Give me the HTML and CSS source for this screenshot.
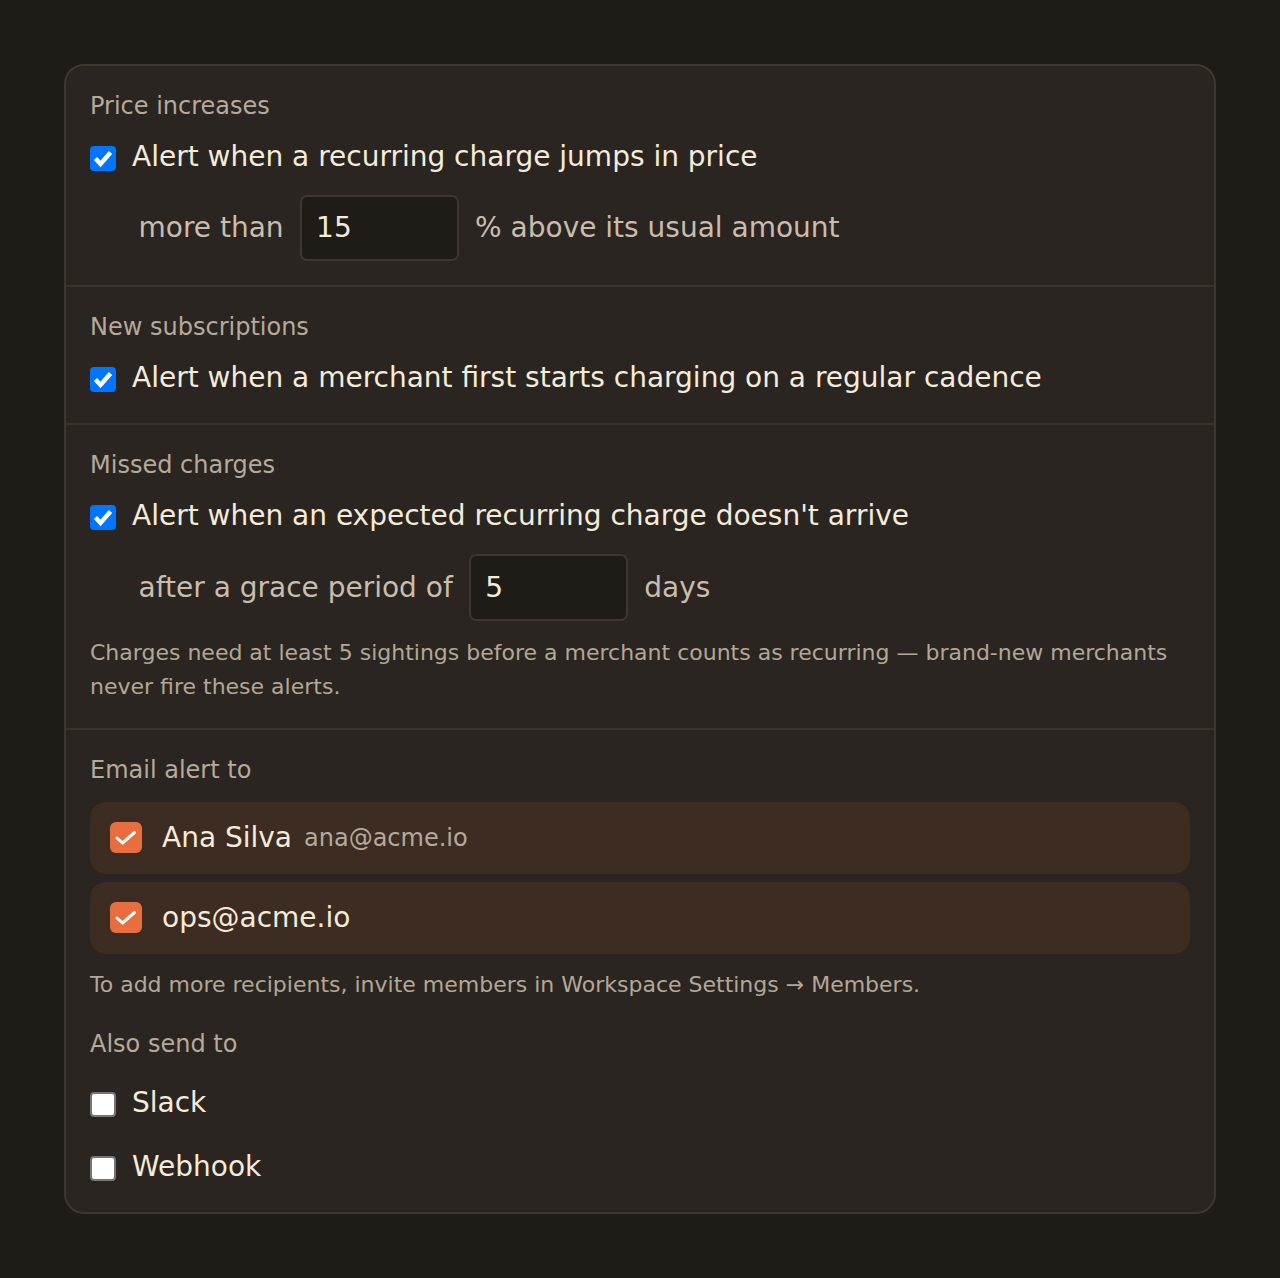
FILE: index.html
```html
<!DOCTYPE html>
<html lang="en">
<head>
    <meta charset="utf-8" />
    <title>Alert settings</title>
    <link rel="stylesheet" href="styles.css">
</head>
<body>
    <div class="card">
        <section class="group">
            <div class="groupTitle">Price increases</div>
            <label class="checkRow">
                <input class="check" type="checkbox" checked>
                <span>Alert when a recurring charge jumps in price</span>
            </label>
            <div class="inlineRow">
                <span>more than</span>
                <input class="numInput" type="text" value="15">
                <span>% above its usual amount</span>
            </div>
        </section>

        <section class="group">
            <div class="groupTitle">New subscriptions</div>
            <label class="checkRow">
                <input class="check" type="checkbox" checked>
                <span>Alert when a merchant first starts charging on a regular cadence</span>
            </label>
        </section>

        <section class="group">
            <div class="groupTitle">Missed charges</div>
            <label class="checkRow">
                <input class="check" type="checkbox" checked>
                <span>Alert when an expected recurring charge doesn't arrive</span>
            </label>
            <div class="inlineRow">
                <span>after a grace period of</span>
                <input class="numInput" type="text" value="5">
                <span>days</span>
            </div>
            <p class="note">Charges need at least 5 sightings before a merchant counts as recurring — brand-new merchants never fire these alerts.</p>
        </section>

        <section class="group">
            <div class="groupTitle">Email alert to</div>
            <div class="recipients">
                <label class="recipient">
                    <input class="recipientCheck" type="checkbox" checked>
                    <span class="recipientName">Ana Silva</span>
                    <span class="recipientEmail">ana@acme.io</span>
                </label>
                <label class="recipient">
                    <input class="recipientCheck" type="checkbox" checked>
                    <span class="recipientName">ops@acme.io</span>
                </label>
            </div>
            <p class="note recipientsNote">To add more recipients, invite members in Workspace Settings → Members.</p>

            <div class="groupTitle alsoTitle">Also send to</div>
            <div class="channels">
                <label class="checkRow">
                    <input class="check" type="checkbox">
                    <span>Slack</span>
                </label>
                <label class="checkRow">
                    <input class="check" type="checkbox">
                    <span>Webhook</span>
                </label>
            </div>
        </section>
    </div>
</body>
</html>
```

FILE: styles.css
```css
html {
    background-color: #1f1b17;
}
body {
    font-family: "DejaVu Sans", sans-serif;
    background-color: #1f1b17;
    color: #f4ebdb;
    margin: 0;
    padding: 64px;
}
.card {
    background-color: #2a2520;
    border: 2px solid #3e372f;
    border-radius: 20px;
}
.group {
    padding: 24px;
}
.group + .group {
    border-top: 2px solid #3a332c;
}
.groupTitle {
    font-size: 24px;
    line-height: 32px;
    color: #b5aa9b;
}
.checkRow {
    display: flex;
    align-items: center;
    gap: 16px;
    margin-top: 14px;
    font-size: 28px;
    line-height: 42px;
    color: #f4ebdb;
}

.check {
    appearance: none;
    box-sizing: border-box;
    flex-shrink: 0;
    width: 26px;
    height: 25px;
    margin: 3px 0 0 0;
    background-color: #ffffff;
    border: 2px solid #767676;
    border-radius: 4px;
}
.check:checked {
    border: none;
    background-color: #0075ff;
    background-image: url("data:image/svg+xml,%3Csvg xmlns='http://www.w3.org/2000/svg' viewBox='0 0 26 25'%3E%3Cpolyline points='5.5,12.5 10.5,18 20.5,6.5' fill='none' stroke='white' stroke-width='4.4'/%3E%3C/svg%3E");
    background-size: 100% 100%;
}
.recipientCheck {
    appearance: none;
    flex-shrink: 0;
    width: 32px;
    height: 31px;
    margin: 0 20px 0 0;
    border-radius: 6px;
    background-color: #e86e40;
    background-image: url("data:image/svg+xml,%3Csvg xmlns='http://www.w3.org/2000/svg' viewBox='0 0 32 31'%3E%3Cpolyline points='7,16 12.5,21 24.5,10.5' fill='none' stroke='white' stroke-width='3' stroke-linecap='round' stroke-linejoin='round'/%3E%3C/svg%3E");
    background-size: 100% 100%;
}

.inlineRow {
    display: flex;
    align-items: center;
    gap: 16.5px;
    margin-top: 16.7px;
    padding-left: 48.5px;
    font-size: 28px;
    color: #c8bdae;
}
.numInput {
    box-sizing: border-box;
    width: 158.5px;
    height: 66.6px;
    padding: 0 14px;
    border: 2px solid #3e372f;
    border-radius: 7px;
    background-color: #1f1b17;
    color: #f4ebdb;
    font-family: "DejaVu Sans", sans-serif;
    font-size: 28px;
    outline: none;
}
.note {
    margin: 15px 0 0;
    font-size: 22px;
    line-height: 34px;
    color: #b3a797;
}
.recipients {
    display: flex;
    flex-direction: column;
    gap: 8.3px;
    margin-top: 16.5px;
}
.recipient {
    display: flex;
    align-items: center;
    height: 71.7px;
    padding: 0 20px;
    background-color: #3d2c22;
    border-radius: 16px;
    font-size: 28px;
}
.recipientName {
    color: #f4ebdb;
}
.recipientEmail {
    margin-left: 12px;
    font-size: 24px;
    color: #b5aa9b;
}
.recipientsNote {
    margin-top: 14px;
}
.alsoTitle {
    margin-top: 26px;
}
.channels {
    display: flex;
    flex-direction: column;
    gap: 22px;
    margin-top: 22px;
}
.channels .checkRow {
    margin-top: 0;
}
```
